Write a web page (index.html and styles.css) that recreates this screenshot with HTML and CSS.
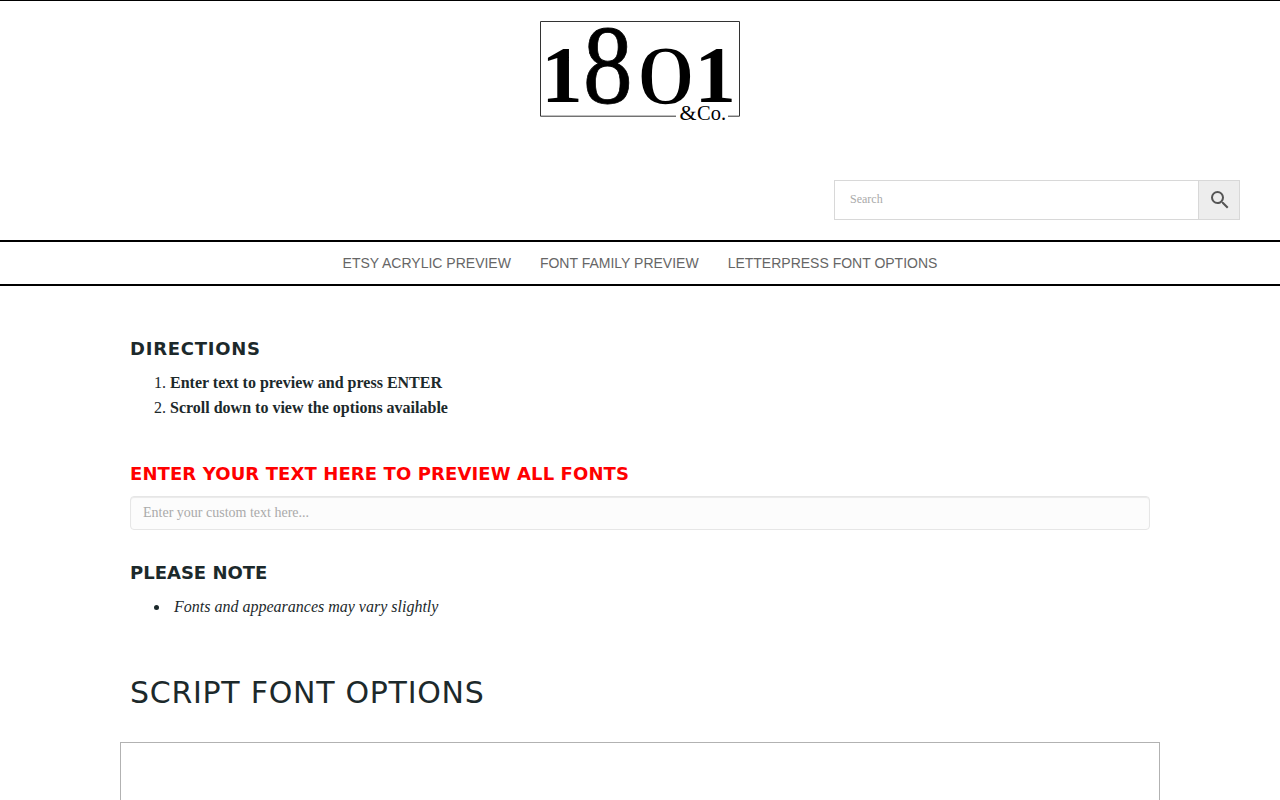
FILE: index.html
```html
<!DOCTYPE html>
<html lang="en">
<head>
<meta charset="utf-8">
<title>1801 &amp; Co.</title>
<link rel="stylesheet" href="styles.css">
</head>
<body>
<header class="header">
  <a class="logo">
    <svg width="200" height="100" viewBox="0 0 200 100" role="img" aria-label="1801 &amp; Co.">
      <path d="M136 95.2H.5V.5h199v94.7H188" fill="none" stroke="#333" stroke-width="1"/>
      <g class="logo-digits">
        <text class="logo-one" transform="translate(1.2 81.3) scale(1.03 1)" font-size="80.5">1</text>
        <text class="logo-eight" transform="translate(43 81.6) scale(.89 1)" font-size="111.5">8</text>
        <text transform="translate(97.3 82) scale(1.37 1)" font-size="83.5">0</text>
        <text class="logo-one" transform="translate(154.6 81.3) scale(1.03 1)" font-size="80.5">1</text>
      </g>
      <text class="logo-co" y="98.5" font-size="20"><tspan x="139.5" textLength="17" lengthAdjust="spacingAndGlyphs">&amp;</tspan><tspan x="157" textLength="29" lengthAdjust="spacingAndGlyphs">Co.</tspan></text>
    </svg>
  </a>
  <form class="search">
    <input class="search-input" type="text" placeholder="Search">
    <button class="search-button" type="button" aria-label="Search">
      <svg width="24" height="24" viewBox="0 0 24 24"><path fill="#555" d="M15.5 14h-.79l-.28-.27A6.471 6.471 0 0 0 16 9.5 6.5 6.5 0 1 0 9.5 16c1.61 0 3.09-.59 4.23-1.57l.27.28v.79l5 4.99L20.49 19l-4.99-5zm-6 0C7.01 14 5 11.99 5 9.5S7.01 5 9.5 5 14 7.01 14 9.5 11.99 14 9.5 14z"/></svg>
    </button>
  </form>
</header>
<nav class="nav">
  <a>ETSY ACRYLIC PREVIEW</a>
  <a>FONT FAMILY PREVIEW</a>
  <a>LETTERPRESS FONT OPTIONS</a>
</nav>
<main class="content">
  <h3 class="heading directions">DIRECTIONS</h3>
  <ol class="list">
    <li><strong>Enter text to preview and press ENTER</strong></li>
    <li><strong>Scroll down to view the options available</strong></li>
  </ol>
  <h3 class="heading prompt">ENTER YOUR TEXT HERE TO PREVIEW ALL FONTS</h3>
  <input class="preview-input" type="text" placeholder="Enter your custom text here...">
  <h3 class="heading note">PLEASE NOTE</h3>
  <ul class="list">
    <li><em>&nbsp;Fonts and appearances may vary slightly</em></li>
  </ul>
  <h1 class="title">SCRIPT FONT OPTIONS</h1>
</main>
<section class="font-box"></section>
</body>
</html>
```

FILE: styles.css
```css
* { box-sizing: border-box; }
html { overflow: hidden; }
body {
  margin: 0;
  height: 800px;
  overflow: hidden;
  display: flex;
  flex-direction: column;
  background: #fff;
  border-top: 1px solid #000;
  color: #1c292b;
  font: 16px/25px "Liberation Serif", serif;
}
.header {
  flex: none;
  height: 239px;
  padding: 20px 40px;
  display: flex;
  flex-direction: column;
  justify-content: space-between;
}
.logo { align-self: center; height: 100px; }
.logo svg { display: block; overflow: visible; }
.logo-digits, .logo-co { font-family: "Liberation Serif", serif; fill: #000; }
.logo-one { font-weight: bold; }
.logo-eight { stroke: #000; stroke-width: .8px; }
.search { display: flex; align-self: flex-end; width: 406px; height: 40px; }
.search-input {
  flex: 1;
  min-width: 0;
  border: 1px solid #d8d8d8;
  border-right: 0;
  padding: 0 15px 2px;
  font: 12px "Liberation Serif", serif;
  outline: 0;
}
.search-button {
  width: 42px;
  padding: 0 0 0 2px;
  border: 1px solid #d8d8d8;
  background: #ededed;
  display: flex;
  align-items: center;
  justify-content: center;
}
.nav {
  flex: none;
  height: 46px;
  border: solid #000;
  border-width: 2px 0;
  display: flex;
  justify-content: center;
  align-items: center;
  gap: 29px;
  font: 14px "Liberation Sans", sans-serif;
  color: #666;
}
.content { flex: none; width: 1020px; margin: 0 auto; padding-top: 50px; }
.heading {
  margin: 0;
  font: bold 18px/25px Verdana, "DejaVu Sans", sans-serif;
}
.directions { letter-spacing: .75px; }
.prompt { margin-top: 41px; color: #f00; letter-spacing: .11px; }
.note { margin-top: 30px; }
.list { margin: 9px 0 0; padding-left: 40px; }
.preview-input {
  display: block;
  width: 100%;
  height: 34px;
  margin-top: 10px;
  padding: 0 12px 1px;
  border: 1px solid #e6e6e6;
  border-radius: 4px;
  background: #fcfcfc;
  box-shadow: inset 0 1px 1px rgba(0, 0, 0, .075);
  font: 14px "Liberation Serif", serif;
  outline: 0;
}
::placeholder { color: #aaa; opacity: 1; }
.title {
  margin: 53px 0 0;
  font: 30px/42px Verdana, "DejaVu Sans", sans-serif;
  letter-spacing: .72px;
}
.font-box {
  flex: 1;
  width: 1040px;
  margin: 28px auto 0;
  border: 1px solid #b2b2b2;
  border-bottom: 0;
}
```
